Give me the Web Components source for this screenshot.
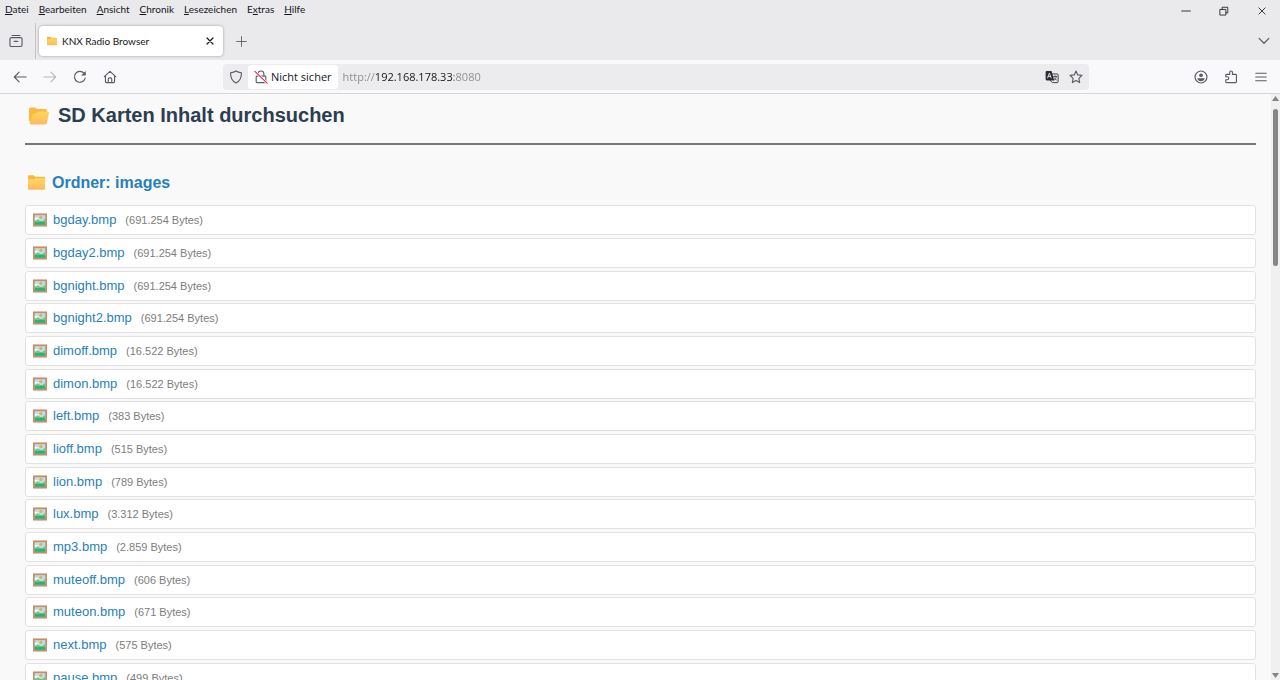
<!DOCTYPE html>
<html lang="de">
<head>
<meta charset="utf-8">
<title>KNX Radio Browser</title>
<style>
    html, body {
        margin: 0;
        height: 100%;
    }

    body {
        font-family: "Liberation Sans", Arial, sans-serif;
        overflow: hidden;
    }
</style>
</head>
<body>

<browser-window>
    <menu-bar slot="menu"></menu-bar>
    <tab-strip slot="tabs">KNX Radio Browser</tab-strip>
    <nav-toolbar slot="toolbar" url="http://192.168.178.33:8080">Nicht sicher</nav-toolbar>
    <sd-browser>
        <span slot="title">SD Karten Inhalt durchsuchen</span>
        <file-folder>
            <span slot="title">Ordner: images</span>
            <file-row size="691.254">bgday.bmp</file-row>
            <file-row size="691.254">bgday2.bmp</file-row>
            <file-row size="691.254">bgnight.bmp</file-row>
            <file-row size="691.254">bgnight2.bmp</file-row>
            <file-row size="16.522">dimoff.bmp</file-row>
            <file-row size="16.522">dimon.bmp</file-row>
            <file-row size="383">left.bmp</file-row>
            <file-row size="515">lioff.bmp</file-row>
            <file-row size="789">lion.bmp</file-row>
            <file-row size="3.312">lux.bmp</file-row>
            <file-row size="2.859">mp3.bmp</file-row>
            <file-row size="606">muteoff.bmp</file-row>
            <file-row size="671">muteon.bmp</file-row>
            <file-row size="575">next.bmp</file-row>
            <file-row size="499">pause.bmp</file-row>
        </file-folder>
    </sd-browser>
    <scroll-bar slot="scroll"></scroll-bar>
</browser-window>

<script>
// all icons are drawn in a 16x16 box
const icons = {
    view: '<path d="M3.5 1.7h9M2.7 4.2h10.6a1.6 1.6 0 0 1 1.6 1.6v6.9a1.6 1.6 0 0 1-1.6 1.6H2.7a1.6 1.6 0 0 1-1.6-1.6V5.8a1.6 1.6 0 0 1 1.6-1.6zM6 8.5h4"/>',
    close: '<path d="M3 3l10 10M13 3L3 13"/>',
    closeTab: '<path d="M2 2l12 12M14 2L2 14" stroke-width="2.4"/>',
    plus: '<path d="M8 1v14M1 8h14"/>',
    minimize: '<path d="M1 8h14"/>',
    restore: '<path d="M2 5.5h9V14.5H2zM5 5.5V2h9v9h-3"/>',
    chevron: '<path d="M1.500 4.500L8 11l6.500-6.500" stroke-width="1.6"/>',
    back: '<path d="M15 8H1.7M7 2.5L1.5 8L7 13.500"/>',
    forward: '<path d="M1 8h13.3M9 2.5L14.5 8L9 13.500"/>',
    reload: '<path d="M13.9 9.3A6.2 6.2 0 1 1 12.6 3.700"/><path d="M14.6 1v5.3H9.300z" fill="currentColor" stroke="none"/>',
    home: '<path d="M1.5 7.600L8 1.500l6.500 6.100M2.8 6.700V13a1.500 1.500 0 0 0 1.500 1.500h7.400a1.500 1.500 0 0 0 1.500-1.500V6.700M6 14.300V10.500a1.500 1.500 0 0 1 1.500-1.500h1a1.500 1.500 0 0 1 1.500 1.500v3.800"/>',
    shield: '<path d="M8 1.200C6.200 2.500 4 3 1.800 3.200C1.600 8.800 3.200 12.700 8 14.800C12.800 12.700 14.400 8.800 14.200 3.200C12 3 9.800 2.500 8 1.200z"/>',
    insecure: '<path d="M4.700 7V4.500a3.300 3.300 0 0 1 6.600 0V7M3.500 7h9a1 1 0 0 1 1 1v5.500a1 1 0 0 1-1 1h-9a1 1 0 0 1-1-1V8a1 1 0 0 1 1-1z"/><path d="M1 1.500l14 13.500" stroke="#fff" stroke-width="3"/><path d="M1 1.500l14 13.500" stroke="#e22850"/>',
    translate: '<path d="M8 4.500h5.800A1.200 1.200 0 0 1 15 5.700v7.500a1.200 1.200 0 0 1-1.200 1.200H8.500L6 12" stroke-width="1"/><path d="M2 1h5.500L10.500 12H2A1.300 1.300 0 0 1 .7 10.700V2.300A1.300 1.300 0 0 1 2 1z" fill="currentColor" stroke="none"/><path d="M3 9l2-5.500L7 9M3.700 7.300h2.600" stroke="#ececee" stroke-width="1"/><path d="M9.500 7.500h4M11.500 6.500v1M13 7.500c-.3 2-1.300 3.200-2.600 4M10.600 9c.5 1.200 1.300 2 2.600 2.500" stroke-width=".8"/>',
    star: '<path d="M8 1.200l2 4.400 4.800.5-3.500 3.400.9 4.900L8 12.100l-4.200 2.300.9-4.900L1.200 6.100 6 5.600z"/>',
    account: '<circle cx="8" cy="8" r="6.800"/><circle cx="8" cy="6" r="2.100" fill="currentColor" stroke="none"/><path d="M3.800 9.500h8.400c-.3 2.100-2 3.300-4.200 3.300s-3.900-1.200-4.200-3.300z" fill="currentColor" stroke="none"/>',
    puzzle: '<path d="M2 7.300V6a1 1 0 0 1 1-1h3.500V2.800a1.600 1.600 0 0 1 3.200 0V5h3.500a1 1 0 0 1 1 1v7.500a1 1 0 0 1-1 1H3a1 1 0 0 1-1-1v-2.400h1.700a1.700 1.700 0 0 0 0-3.400H2z"/>',
    burger: '<path d="M2 3.700h12M2 8h12M2 12.300h12"/>',
    folder: '<defs><linearGradient id="f" x1="0" y1="0" x2="0" y2="1"><stop offset="0" stop-color="#ffd95a"/><stop offset="1" stop-color="#ffb866"/></linearGradient></defs><path d="M0 2.200a1 1 0 0 1 1-1h4.300l1.500 1.500H15a1 1 0 0 1 1 1V8H0z" fill="#f7b741" stroke="none"/><path d="M0 5h5.500l1.300-1.100H15a1 1 0 0 1 1 1v8.900a1 1 0 0 1-1 1H1a1 1 0 0 1-1-1z" fill="url(#f)" stroke="none"/>',
    folderOpen: '<defs><linearGradient id="o" x1="0" y1="0" x2="0" y2="1"><stop offset="0" stop-color="#ffd65a"/><stop offset="1" stop-color="#ffb960"/></linearGradient></defs><path d="M0 2.300a1.200 1.200 0 0 1 1.200-1.200h3.700l1.500 1.300h6.800a1.200 1.200 0 0 1 1.200 1.200v9H1L0 12z" fill="#fbb843" stroke="none"/><path d="M4 5.900l2-.3 1.300-1.200h7.800a.9.900 0 0 1 .9 1.100l-1.800 8a1.600 1.600 0 0 1-1.600 1.300H1.500c-.8 0-1.200-.6-1-1.300L3 6.700a1.200 1.200 0 0 1 1-.8z" fill="url(#o)" stroke="none"/>',
    picture: '<g stroke="none"><path d="M0 .5h16v15H0z" fill="#cd8a66"/><path d="M2 2.500h12v11H2z" fill="#b0e3f6"/><path d="M2 5.500h2l1 .8h2v1.200H2z" fill="#fff"/><circle cx="9" cy="5" r="1.900" fill="#f6ad35"/><path d="M2 9.500L5.500 7l4 3L14 6.500v7H2z" fill="#7cc47c"/><path d="M2 13.500V10l4 .5 3-.8 5 1v2.800z" fill="#22b573"/></g>'
};

class UiIcon extends HTMLElement {
    constructor() {
        super();
        this.attachShadow({ mode: 'open' });
    }

    connectedCallback() {
        this.shadowRoot.innerHTML = `
            <style>
                :host {
                    display: block;
                    flex: none;
                    width: var(--icon-size, 14px);
                    height: var(--icon-size, 14px);
                }

                svg {
                    display: block;
                    width: 100%;
                    height: 100%;
                }
            </style>
            <svg viewBox="0 0 16 16" fill="none" stroke="currentColor" stroke-width="1.3" stroke-linecap="round" stroke-linejoin="round" aria-hidden="true">${icons[this.getAttribute('name')]}</svg>
        `;
    }
}

class BrowserWindow extends HTMLElement {
    constructor() {
        super();
        this.attachShadow({ mode: 'open' }).innerHTML = `
            <style>
                :host {
                    display: flex;
                    flex-direction: column;
                    height: 100vh;
                    background-color: #f9f9f9;
                }

                .chrome {
                    font-family: "Open Sans", "Noto Sans", sans-serif;
                    color: #15141a;
                    background-color: #eaeaed;
                }

                .view {
                    display: flex;
                    flex: 1;
                    min-height: 0;
                }
            </style>
            <header class="chrome">
                <slot name="menu"></slot>
                <slot name="tabs"></slot>
                <slot name="toolbar"></slot>
            </header>
            <div class="view">
                <slot></slot>
                <slot name="scroll"></slot>
            </div>
        `;
    }
}

class MenuBar extends HTMLElement {
    constructor() {
        super();
        this.attachShadow({ mode: 'open' }).innerHTML = `
            <style>
                :host {
                    display: flex;
                    justify-content: space-between;
                    height: 22px;
                }

                nav {
                    display: flex;
                    gap: 10px;
                    padding-left: 5px;
                }

                button {
                    padding: 0;
                    border: 0;
                    background: none;
                    color: inherit;
                    font: 10px/19px Lato, "Open Sans", sans-serif;
                    height: 19px;
                }

                .controls {
                    display: flex;
                    align-items: center;
                    gap: 28px;
                    padding-right: 13px;
                    --icon-size: 10px;
                }
            </style>
            <nav>
                <button><u>D</u>atei</button>
                <button><u>B</u>earbeiten</button>
                <button><u>A</u>nsicht</button>
                <button><u>C</u>hronik</button>
                <button><u>L</u>esezeichen</button>
                <button>E<u>x</u>tras</button>
                <button><u>H</u>ilfe</button>
            </nav>
            <div class="controls">
                <button aria-label="Minimieren"><ui-icon name="minimize"></ui-icon></button>
                <button aria-label="Wiederherstellen"><ui-icon name="restore"></ui-icon></button>
                <button aria-label="Schließen"><ui-icon name="close"></ui-icon></button>
            </div>
        `;
    }
}

class TabStrip extends HTMLElement {
    constructor() {
        super();
        this.attachShadow({ mode: 'open' }).innerHTML = `
            <style>
                :host {
                    display: flex;
                    align-items: center;
                    height: 38px;
                    padding-right: 10px;
                    font: 10px Lato, "Open Sans", sans-serif;
                }

                button {
                    padding: 0;
                    border: 0;
                    background: none;
                    color: #5b5b66;
                }

                .overview {
                    display: flex;
                    align-items: center;
                    padding: 0 12px 0 9px;
                    height: 36px;
                    border-right: 1px solid #c3c3c8;
                }

                .tab {
                    display: flex;
                    align-items: center;
                    gap: 5px;
                    box-sizing: border-box;
                    width: 184px;
                    height: 30px;
                    margin: 0 13px 0 3px;
                    padding: 0 9px 0 8px;
                    border-radius: 4px;
                    background-color: #fff;
                    box-shadow: 0 0 3px rgba(0, 0, 0, 0.35);
                }

                .tab ui-icon {
                    --icon-size: 10px;
                }

                .label {
                    flex: 1;
                }

                .tab button {
                    color: #15141a;
                }

                .tab button ui-icon {
                    --icon-size: 8px;
                }

                .plus {
                    --icon-size: 11px;
                }

                .all {
                    margin-left: auto;
                    --icon-size: 12px;
                }
            </style>
            <div class="overview"><button aria-label="Übersicht"><ui-icon name="view"></ui-icon></button></div>
            <div class="tab">
                <ui-icon name="folder"></ui-icon>
                <span class="label"><slot></slot></span>
                <button aria-label="Tab schließen"><ui-icon name="closeTab"></ui-icon></button>
            </div>
            <button class="plus" aria-label="Neuer Tab"><ui-icon name="plus"></ui-icon></button>
            <button class="all" aria-label="Alle Tabs"><ui-icon name="chevron"></ui-icon></button>
        `;
    }
}

class NavToolbar extends HTMLElement {
    constructor() {
        super();
        this.attachShadow({ mode: 'open' }).innerHTML = `
            <style>
                :host {
                    display: grid;
                    grid-template-columns: 210px minmax(0, 866px) 1fr;
                    align-items: center;
                    height: 33px;
                    padding: 0 12px 0 13px;
                    border-bottom: 1px solid #d5d5d9;
                    background-color: #f9f9fb;
                    font-size: 11px;
                }

                button {
                    padding: 0;
                    border: 0;
                    background: none;
                    color: #5b5b66;
                }

                button:disabled {
                    color: #b9b9bf;
                }

                .group {
                    display: flex;
                    gap: 16px;
                }

                .end {
                    justify-content: flex-end;
                }

                .address {
                    display: flex;
                    align-items: center;
                    box-sizing: border-box;
                    height: 26px;
                    padding: 0 6px;
                    border-radius: 4px;
                    background-color: #ececee;
                }

                .address > button {
                    margin-right: 5px;
                }

                .site {
                    display: flex;
                    align-items: center;
                    gap: 3px;
                    height: 24px;
                    padding: 0 6px;
                    border-radius: 3px;
                    background-color: #fff;
                    font: inherit;
                }

                .address .site {
                    color: #15141a;
                }

                .site ui-icon {
                    color: #5b5b66;
                }

                /* the host part is darker than the scheme and the port */
                input {
                    flex: 1;
                    min-width: 0;
                    padding: 0;
                    border: 0;
                    outline: 0;
                    font: inherit;
                    color: transparent;
                    caret-color: #15141a;
                    background: linear-gradient(90deg, #8a8a90 33px, #15141a 33px, #15141a 111px, #8a8a90 111px);
                    -webkit-background-clip: text;
                    background-clip: text;
                }

                .actions {
                    display: flex;
                    gap: 10px;
                }

                .translate {
                    color: #2b2a33;
                }
            </style>
            <div class="group">
                <button aria-label="Zurück"><ui-icon name="back"></ui-icon></button>
                <button aria-label="Vor" disabled><ui-icon name="forward"></ui-icon></button>
                <button aria-label="Neu laden"><ui-icon name="reload"></ui-icon></button>
                <button aria-label="Startseite"><ui-icon name="home"></ui-icon></button>
            </div>
            <div class="address">
                <button aria-label="Schutz"><ui-icon name="shield"></ui-icon></button>
                <button class="site"><ui-icon name="insecure"></ui-icon><slot></slot></button>
                <input type="text" aria-label="Adresse">
                <div class="actions">
                    <button class="translate" aria-label="Übersetzen"><ui-icon name="translate"></ui-icon></button>
                    <button aria-label="Lesezeichen setzen"><ui-icon name="star"></ui-icon></button>
                </div>
            </div>
            <div class="group end">
                <button aria-label="Konto"><ui-icon name="account"></ui-icon></button>
                <button aria-label="Erweiterungen"><ui-icon name="puzzle"></ui-icon></button>
                <button aria-label="Menü"><ui-icon name="burger"></ui-icon></button>
            </div>
        `;
    }

    connectedCallback() {
        this.shadowRoot.querySelector('input').value = this.getAttribute('url');
    }
}

class SdBrowser extends HTMLElement {
    constructor() {
        super();
        this.attachShadow({ mode: 'open' }).innerHTML = `
            <style>
                :host {
                    display: block;
                    flex: 1;
                    min-width: 0;
                    overflow: hidden;
                    padding: 0 15px 0 25px;
                }

                h1 {
                    display: flex;
                    align-items: center;
                    gap: 9px;
                    margin: 0 0 27px;
                    padding: 9px 4px 15px;
                    border-bottom: 2px solid #777;
                    color: #2c3e50;
                    font-size: 20px;
                    line-height: 25px;
                }

                ui-icon {
                    --icon-size: 20px;
                }
            </style>
            <h1><ui-icon name="folderOpen"></ui-icon><slot name="title"></slot></h1>
            <slot></slot>
        `;
    }
}

class FileFolder extends HTMLElement {
    constructor() {
        super();
        this.attachShadow({ mode: 'open' }).innerHTML = `
            <style>
                :host {
                    display: block;
                }

                h2 {
                    display: flex;
                    align-items: center;
                    gap: 7px;
                    margin: 0 0 12px;
                    padding-left: 3px;
                    color: #2980b9;
                    font-size: 16px;
                    line-height: 21px;
                }

                ui-icon {
                    --icon-size: 17px;
                }

                ::slotted(file-row) {
                    margin-bottom: 3px;
                }

                ::slotted(file-row:nth-of-type(3n)) {
                    margin-bottom: 2px;
                }
            </style>
            <h2><ui-icon name="folder"></ui-icon><slot name="title"></slot></h2>
            <div role="list"><slot></slot></div>
        `;
    }
}

class FileRow extends HTMLElement {
    constructor() {
        super();
        this.attachShadow({ mode: 'open' }).innerHTML = `
            <style>
                :host {
                    display: flex;
                    align-items: center;
                    box-sizing: border-box;
                    padding: 3px 7px;
                    border: 1px solid #e2e2e2;
                    border-radius: 3px;
                    background-color: #fff;
                    line-height: 22px;
                }

                .text {
                    display: flex;
                    align-items: baseline;
                    gap: 9px;
                    margin-left: 6px;
                }

                a {
                    color: #2980b9;
                    font-size: 13px;
                    text-decoration: none;
                }

                a:hover {
                    text-decoration: underline;
                }

                .size {
                    color: #7d7d7d;
                    font-size: 11px;
                }
            </style>
            <ui-icon name="picture"></ui-icon>
            <div class="text"><a><slot></slot></a><span class="size"></span></div>
        `;
    }

    connectedCallback() {
        this.setAttribute('role', 'listitem');
        this.shadowRoot.querySelector('a').href = '#' + this.textContent;
        this.shadowRoot.querySelector('.size').textContent = `(${this.getAttribute('size')} Bytes)`;
    }
}

class ScrollBar extends HTMLElement {
    constructor() {
        super();
        this.attachShadow({ mode: 'open' }).innerHTML = `
            <style>
                :host {
                    display: flex;
                    flex-direction: column;
                    align-items: center;
                    flex: none;
                    width: 9px;
                    background-color: #f0f0f0;
                }

                svg {
                    flex: none;
                    width: 7px;
                    height: 5px;
                    margin: 2px 0;
                    fill: #858585;
                }

                .track {
                    flex: 1;
                    padding-top: 6px;
                }

                .thumb {
                    width: 5px;
                    height: 28%;
                    border-radius: 3px;
                    background-color: #858585;
                }
            </style>
            <svg viewBox="0 0 7 5"><path d="M3.5 0L7 5H0z"/></svg>
            <div class="track"><div class="thumb"></div></div>
            <svg viewBox="0 0 7 5"><path d="M0 0h7L3.5 5z"/></svg>
        `;
    }
}

customElements.define('ui-icon', UiIcon);
customElements.define('browser-window', BrowserWindow);
customElements.define('menu-bar', MenuBar);
customElements.define('tab-strip', TabStrip);
customElements.define('nav-toolbar', NavToolbar);
customElements.define('sd-browser', SdBrowser);
customElements.define('file-folder', FileFolder);
customElements.define('file-row', FileRow);
customElements.define('scroll-bar', ScrollBar);
</script>
</body>
</html>
